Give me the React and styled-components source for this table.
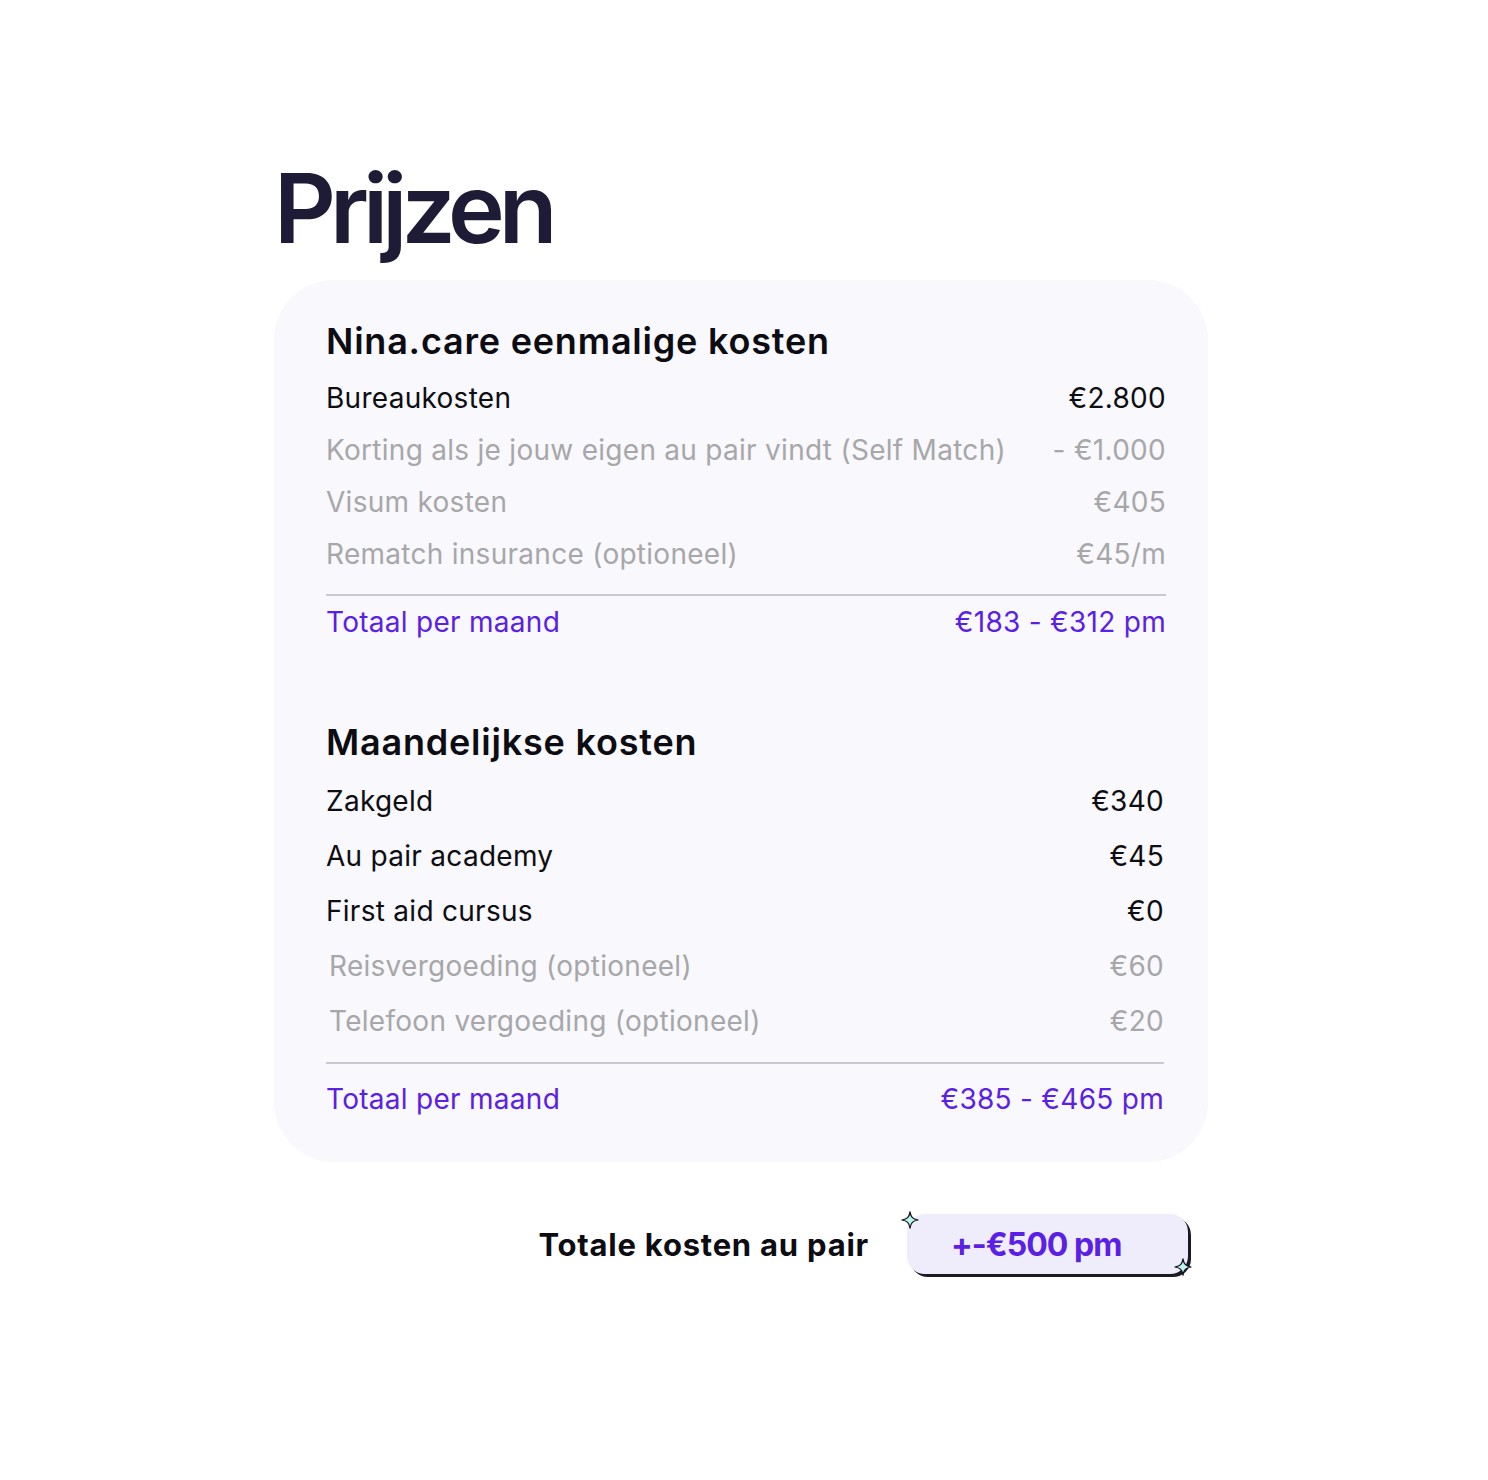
import React from 'react';
import styled, { createGlobalStyle } from 'styled-components';

const GlobalStyle = createGlobalStyle`
    body {
        margin: 0;
        background: #ffffff;
        font-family: Inter, "Noto Sans", sans-serif;
    }
`;

const Page = styled.main`
    width: 934px;
    margin-left: 274px;
    padding-top: 160px;
    padding-bottom: 200px;
`;

const Title = styled.h1`
    margin: 0 0 24px 0;
    font-size: 96px;
    line-height: 1;
    font-weight: 600;
    letter-spacing: -0.062em;
    color: #1e1b36;
`;

const Card = styled.section`
    background: #f8f8fd;
    border-radius: 60px;
    padding: 40px 42px 37px 52px;
`;

const SectionTitle = styled.h2`
    margin: ${p => p.$first ? '0' : '73px'} 0 10px;
    font-size: 36px;
    line-height: 42px;
    font-weight: 600;
    letter-spacing: 0.022em;
    color: #0c0c12;
`;

const Row = styled.div`
    display: flex;
    justify-content: space-between;
    align-items: center;
    height: ${p => p.$h}px;
    padding-left: ${p => p.$indent ? 3 : 0}px;
    padding-right: ${p => p.$inset || 0}px;
    font-size: 28px;
    font-weight: 400;
    letter-spacing: 0.01em;
    color: ${p => p.$muted ? '#a7a7aa' : '#0d0d12'};
`;

const Divider = styled.hr`
    margin: 14px ${p => p.$inset || 0}px 0 0;
    border: 0;
    border-top: 2px solid #c9c8d2;
`;

const TotalRow = styled(Row)`
    color: #5a20e6;
    height: 52px;
    margin-top: ${p => p.$offset}px;
`;

const Summary = styled.div`
    display: flex;
    justify-content: flex-end;
    align-items: center;
    gap: 38px;
    margin: 52px 20px 0 0;
`;

const SummaryLabel = styled.span`
    font-size: 31px;
    font-weight: 700;
    letter-spacing: 0.025em;
    color: #0c0c12;
`;

const PriceTag = styled.div`
    position: relative;
    box-sizing: border-box;
    width: 281px;
    height: 60px;
    padding-left: 44px;
    display: flex;
    align-items: center;
    background: #efedfc;
    border-radius: 18px;
    box-shadow: 3px 3px 0 #1b1b26;
    font-size: 32px;
    font-weight: 700;
    letter-spacing: -0.03em;
    color: #5a20e6;
`;

const Sparkle = styled.svg`
    position: absolute;
    width: 18px;
    height: 18px;
    ${p => p.$corner === 'tl' ? 'left: -6px; top: -3px;' : 'right: -4px; bottom: -2px;'}
`;

const Star = ({ corner }) => (
    <Sparkle $corner={corner} viewBox="0 0 20 20">
        <path d="M10 1 C11 7 13 9 19 10 C13 11 11 13 10 19 C9 13 7 11 1 10 C7 9 9 7 10 1 Z"
            fill="#bdf6ec" stroke="#15151f" strokeWidth="1.4" strokeLinejoin="round" />
    </Sparkle>
);

const oneTime = [
    { label: 'Bureaukosten', value: '€2.800' },
    { label: 'Korting als je jouw eigen au pair vindt (Self Match)', value: '- €1.000', muted: true },
    { label: 'Visum kosten', value: '€405', muted: true },
    { label: 'Rematch insurance (optioneel)', value: '€45/m', muted: true },
];

const monthly = [
    { label: 'Zakgeld', value: '€340' },
    { label: 'Au pair academy', value: '€45' },
    { label: 'First aid cursus', value: '€0' },
    { label: 'Reisvergoeding (optioneel)', value: '€60', muted: true, indent: true },
    { label: 'Telefoon vergoeding (optioneel)', value: '€20', muted: true, indent: true },
];

export default function App() {
    return (
        <>
            <GlobalStyle />
            <Page>
                <Title>Prijzen</Title>
                <Card>
                    <SectionTitle $first>Nina.care eenmalige kosten</SectionTitle>
                    {oneTime.map(r => (
                        <Row key={r.label} $h={52} $muted={r.muted}>
                            <span>{r.label}</span>
                            <span>{r.value}</span>
                        </Row>
                    ))}
                    <Divider />
                    <TotalRow $offset={0}>
                        <span>Totaal per maand</span>
                        <span>€183 - €312 pm</span>
                    </TotalRow>

                    <SectionTitle>Maandelijkse kosten</SectionTitle>
                    {monthly.map(r => (
                        <Row key={r.label} $h={55} $muted={r.muted} $indent={r.indent} $inset={2}>
                            <span>{r.label}</span>
                            <span>{r.value}</span>
                        </Row>
                    ))}
                    <Divider $inset={2} />
                    <TotalRow $offset={9} $inset={2}>
                        <span>Totaal per maand</span>
                        <span>€385 - €465 pm</span>
                    </TotalRow>
                </Card>

                <Summary>
                    <SummaryLabel>Totale kosten au pair</SummaryLabel>
                    <PriceTag>
                        <Star corner="tl" />
                        +-€500 pm
                        <Star corner="br" />
                    </PriceTag>
                </Summary>
            </Page>
        </>
    );
}
